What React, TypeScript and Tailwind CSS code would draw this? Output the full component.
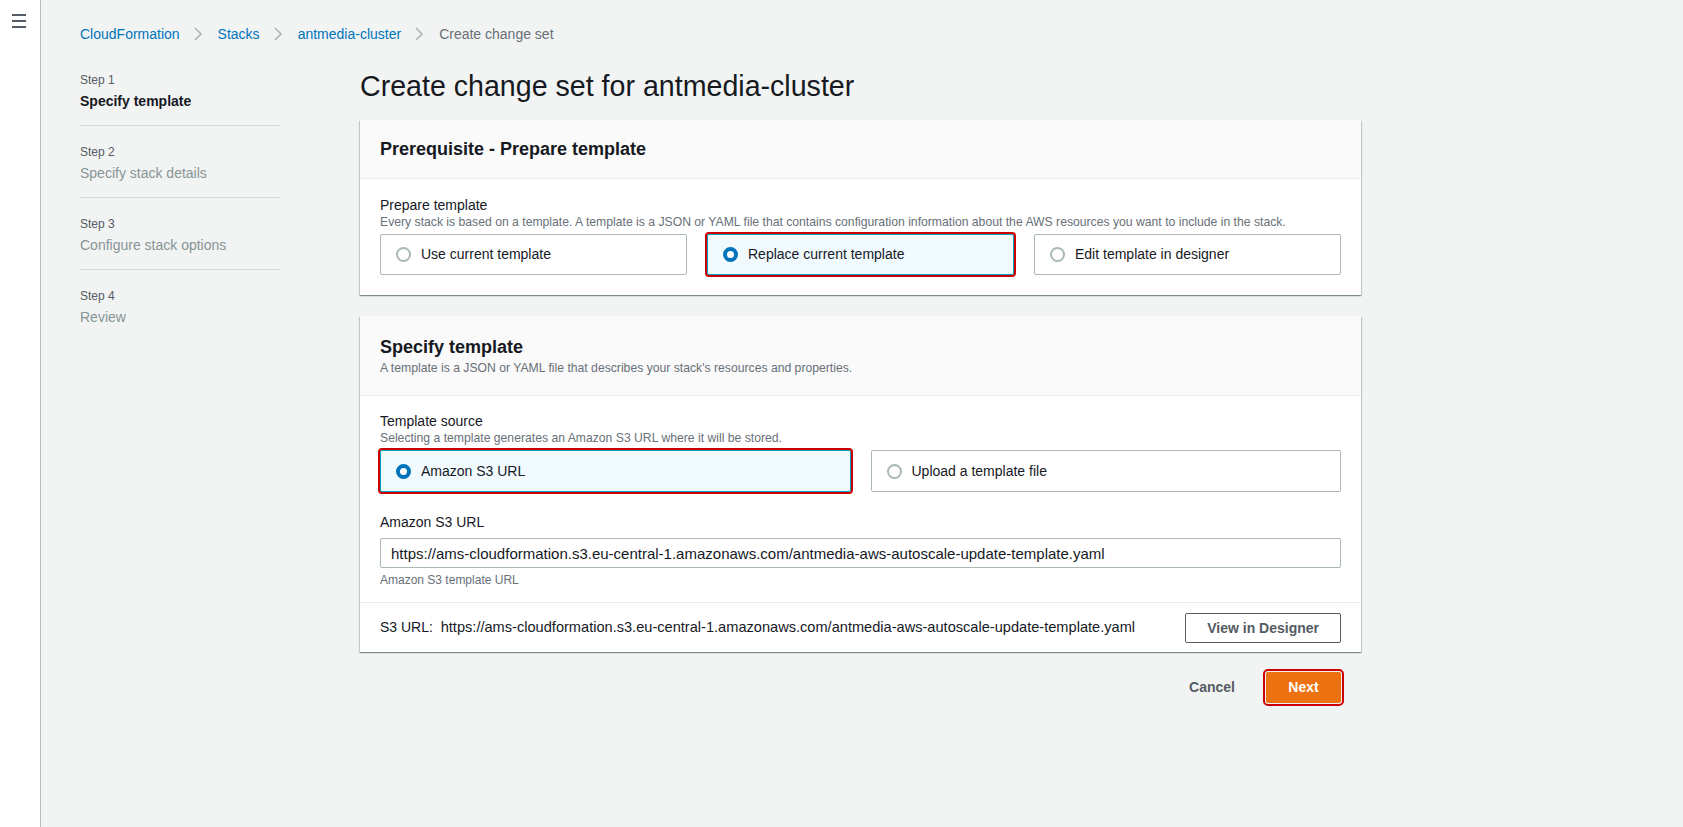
import React from "react";

const steps = [
  { label: "Step 1", name: "Specify template", active: true },
  { label: "Step 2", name: "Specify stack details", active: false },
  { label: "Step 3", name: "Configure stack options", active: false },
  { label: "Step 4", name: "Review", active: false },
];

const url =
  "https://ams-cloudformation.s3.eu-central-1.amazonaws.com/antmedia-aws-autoscale-update-template.yaml";

function Chevron() {
  return (
    <svg width="10" height="16" viewBox="0 0 10 16" className="ml-[13px] mr-[15px] shrink-0">
      <polyline points="2,2 8,8 2,14" fill="none" stroke="#aab7b8" strokeWidth="1.6" />
    </svg>
  );
}

function Radio({ checked }: { checked: boolean }) {
  if (checked) {
    return <span className="w-[15px] h-[15px] rounded-full border-[4px] border-[#0073bb] bg-white shrink-0" />;
  }
  return <span className="w-[15px] h-[15px] rounded-full border-2 border-[#aab7b8] bg-white shrink-0" />;
}

function Tile({ label, checked, tall }: { label: string; checked?: boolean; tall?: boolean }) {
  const h = tall ? "h-[42px]" : "h-[41px]";
  return (
    <div
      className={
        checked
          ? `${h} flex items-center gap-[10px] pl-[15px] rounded-[2px] border border-[#00a1c9] bg-[#f1faff] outline-2 outline-[#cc0000]`
          : `${h} flex items-center gap-[10px] pl-[15px] rounded-[2px] border border-[#aab7b8] bg-white`
      }
    >
      <Radio checked={!!checked} />
      <span className="text-[14px] text-[#16191f]">{label}</span>
    </div>
  );
}

const card =
  "bg-white shadow-[0_1px_1px_0_rgba(0,28,36,0.3),1px_1px_1px_0_rgba(0,28,36,0.15),-1px_1px_1px_0_rgba(0,28,36,0.15)]";

export default function App() {
  return (
    <div className="flex min-h-screen font-['Liberation_Sans',Arial,sans-serif] text-[#16191f]">
      {/* side nav toggle */}
      <div className="w-[41px] shrink-0 bg-white border-r border-[#b6bec0] pt-[14px] pl-[12px]">
        <div className="flex flex-col gap-[4px] w-[14px]">
          <span className="h-[2px] bg-[#545b64]" />
          <span className="h-[2px] bg-[#545b64]" />
          <span className="h-[2px] bg-[#545b64]" />
        </div>
      </div>

      <div className="flex-1 bg-[#f2f3f3] pl-[39px] pt-[24px]">
        {/* breadcrumb */}
        <div className="flex items-center h-[20px] text-[14px] leading-[20px]">
          <span className="text-[#0073bb]">CloudFormation</span>
          <Chevron />
          <span className="text-[#0073bb]">Stacks</span>
          <Chevron />
          <span className="text-[#0073bb]">antmedia-cluster</span>
          <Chevron />
          <span className="text-[#687078]">Create change set</span>
        </div>

        <div className="flex gap-[80px]">
          {/* steps */}
          <nav className="w-[200px] pt-[28px]">
            {steps.map((s, i) => (
              <div
                key={s.label}
                className={i < steps.length - 1 ? "pb-[14px] mb-[18px] border-b border-[#d5dbdb]" : ""}
              >
                <div className="text-[12px] leading-[16px] text-[#545b64] mb-[3px]">{s.label}</div>
                <div
                  className={
                    s.active
                      ? "text-[14px] leading-[20px] font-bold text-[#16191f]"
                      : "text-[14px] leading-[20px] text-[#879596]"
                  }
                >
                  {s.name}
                </div>
              </div>
            ))}
          </nav>

          {/* main */}
          <main className="w-[1001px] pt-[22px]">
            <h1 className="text-[28.6px] leading-[40px] font-normal text-[#16191f] mb-[14px]">
              Create change set for antmedia-cluster
            </h1>

            <section className={card}>
              <div className="h-[59px] flex items-center px-5 bg-[#fafafa] border-b border-[#eaeded]">
                <h2 className="text-[18px] leading-[22px] font-bold">Prerequisite - Prepare template</h2>
              </div>
              <div className="px-5 pt-[17px] pb-[20px]">
                <div className="text-[14px] leading-[18px]">Prepare template</div>
                <div className="text-[12.2px] leading-[16px] text-[#687078]">
                  Every stack is based on a template. A template is a JSON or YAML file that contains configuration
                  information about the AWS resources you want to include in the stack.
                </div>
                <div className="grid grid-cols-3 gap-5 mt-[4px]">
                  <Tile label="Use current template" />
                  <Tile label="Replace current template" checked />
                  <Tile label="Edit template in designer" />
                </div>
              </div>
            </section>

            <section className={`${card} mt-[21px]`}>
              <div className="px-5 pt-[20px] pb-[19px] bg-[#fafafa] border-b border-[#eaeded]">
                <h2 className="text-[18px] leading-[22px] font-bold">Specify template</h2>
                <div className="text-[12.2px] leading-[16px] text-[#687078] mt-[2px]">
                  A template is a JSON or YAML file that describes your stack's resources and properties.
                </div>
              </div>
              <div className="px-5 pt-[16px] pb-[14px]">
                <div className="text-[14px] leading-[18px]">Template source</div>
                <div className="text-[12.2px] leading-[16px] text-[#687078]">
                  Selecting a template generates an Amazon S3 URL where it will be stored.
                </div>
                <div className="grid grid-cols-2 gap-5 mt-[4px]">
                  <Tile label="Amazon S3 URL" checked tall />
                  <Tile label="Upload a template file" tall />
                </div>

                <div className="text-[14px] leading-[18px] mt-[21px]">Amazon S3 URL</div>
                <input
                  readOnly
                  value={url}
                  className="mt-[7px] w-full h-[30px] px-[10px] text-[15px] text-[#16191f] border border-[#aab7b8] rounded-[2px] bg-white outline-none"
                />
                <div className="text-[12px] leading-[16px] text-[#687078] mt-[4px]">Amazon S3 template URL</div>
              </div>
              <div className="flex items-center justify-between px-5 pt-[10px] pb-[9px] border-t border-[#eaeded]">
                <span className="text-[14px]">
                  S3 URL:&nbsp;&nbsp;<span className="text-[14.6px]">{url}</span>
                </span>
                <button className="h-[30px] px-[21px] text-[14px] font-bold text-[#545b64] border border-[#545b64] rounded-[2px] bg-white">
                  View in Designer
                </button>
              </div>
            </section>

            <div className="flex justify-end items-center gap-[31px] mt-[20px] pr-[20px]">
              <span className="text-[14px] font-bold text-[#545b64]">Cancel</span>
              <button className="h-[31px] w-[75px] text-[14px] font-bold text-white bg-[#ec7211] border border-[#ec7211] rounded-[2px] outline-2 outline-offset-1 outline-[#cc0000]">
                Next
              </button>
            </div>
          </main>
        </div>
      </div>
    </div>
  );
}
